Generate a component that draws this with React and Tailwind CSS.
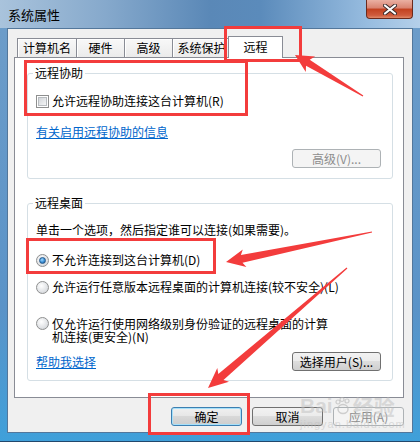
import React from 'react'

// 红色标注箭头：尾部细，头部三角
function arrowPoints(x1, y1, x2, y2, head = 18, hw = 9, sw = 3.5, tw = 0.6) {
    const dx = x2 - x1
    const dy = y2 - y1
    const len = Math.hypot(dx, dy)
    const ux = dx / len
    const uy = dy / len
    const px = -uy
    const py = ux
    const bx = x2 - ux * head
    const by = y2 - uy * head
    const jx = bx + ux * 3
    const jy = by + uy * 3
    const pts = [
        [x1 + px * tw, y1 + py * tw],
        [jx + px * sw, jy + py * sw],
        [bx + px * hw, by + py * hw],
        [x2, y2],
        [bx - px * hw, by - py * hw],
        [jx - px * sw, jy - py * sw],
        [x1 - px * tw, y1 - py * tw],
    ]
    return pts.map(p => p[0].toFixed(1) + ',' + p[1].toFixed(1)).join(' ')
}

function Btn({ children, kind, w = 'w-[71px]' }) {
    let cls = 'border-[#707070] bg-[linear-gradient(#f2f2f2_0%,#ebebeb_50%,#dddddd_50%,#cfcfcf_100%)] text-black'
    if (kind === 'default') {
        cls = 'border-[#3c7fb1] bg-[linear-gradient(#f0f0f0_0%,#e6e6e6_50%,#d8d8d8_50%,#cdcdcd_100%)] shadow-[inset_0_0_0_1px_#a6e0fa] text-black'
    }
    if (kind === 'disabled') {
        cls = 'border-[#adb2b5] bg-[#f4f4f4] text-[#8d8d8d]'
    }
    return (
        <div className={`${w} h-[19px] rounded-[3px] border flex items-center justify-center text-[12px] leading-[14px] ${cls}`}>
            {children}
        </div>
    )
}

function Checkbox() {
    return (
        <div className="w-[13px] h-[13px] border border-[#8e8f8f] bg-white p-[1px] shrink-0">
            <div className="w-full h-full border border-[#b8bcc0] bg-[linear-gradient(135deg,#d3d6da,#f4f5f6)]"></div>
        </div>
    )
}

function Radio({ checked }) {
    return (
        <div className="w-[13px] h-[13px] rounded-full border border-[#8e8f8f] bg-[radial-gradient(circle_at_40%_35%,#ffffff,#e0e2e5_60%,#c8cbcf)] flex items-center justify-center shrink-0">
            {checked && (
                <div className="w-[7px] h-[7px] rounded-full border border-[#25598b] bg-[radial-gradient(circle_at_40%_35%,#9fd8ff,#3a8fd6_55%,#1a4f86)]"></div>
            )}
        </div>
    )
}

function Group({ title, className = '', children }) {
    return (
        <div className={`relative rounded-[3px] border border-[#d5dfe5] pl-[8px] pr-[11px] ${className}`}>
            <span className="absolute left-[5px] top-[-8px] px-[2px] bg-white leading-[14px]">{title}</span>
            {children}
        </div>
    )
}

function App() {
    const tabs = [
        { label: '计算机名', w: 'w-[60px]' },
        { label: '硬件', w: 'w-[49px] -ml-px' },
        { label: '高级', w: 'w-[49px] -ml-px' },
        { label: '系统保护', w: 'w-[59px] -ml-px' },
    ]

    const red = '#f33c3c'

    return (
        <div className="relative w-[420px] h-[442px] overflow-hidden bg-[linear-gradient(180deg,#6e9dc9_0%,#5a93c8_70%,#3fa0da_100%)] font-['Noto_Sans_CJK_SC','Liberation_Sans',sans-serif] text-[12px] text-black">
            {/* 标题栏 */}
            <div className="h-[28px] flex items-start bg-[linear-gradient(90deg,#a9c3dc_0%,#86a9cc_25%,#5a88b7_50%,#5b8bbb_62%,#98bde0_88%,#b5d0ea_100%)]">
                <span className="pl-[8px] pt-[6px] text-[13px] leading-[18px] text-black">系统属性</span>
                <div className="ml-auto mr-[7px] w-[47px] h-[19px] rounded-b-[4px] border border-t-0 border-[#6b2a1c] bg-[linear-gradient(#eab0a2_0%,#d9826f_45%,#c2401f_50%,#cf5b3c_85%,#e08a6a_100%)] flex items-center justify-center">
                    <svg width="14" height="11" viewBox="0 0 14 11">
                        <path d="M2 1.5 L12 9.5 M12 1.5 L2 9.5" stroke="#3a2a2a" strokeWidth="4" strokeLinecap="round" />
                        <path d="M2 1.5 L12 9.5 M12 1.5 L2 9.5" stroke="#ffffff" strokeWidth="2.2" strokeLinecap="round" />
                    </svg>
                </div>
            </div>

            {/* 客户区 */}
            <div className="px-[7px]">
                <div className="h-[405px] border border-[#53779b] bg-[#f0f0f0] flex flex-col pt-[7px] pl-[6px] pr-[8px]">
                    {/* 选项卡 */}
                    <div className="flex items-end h-[21px] pl-[3px]">
                        {tabs.map(t => (
                            <div
                                key={t.label}
                                className={`${t.w} h-[19px] border border-b-0 border-[#898c95] bg-[linear-gradient(#f8f8f8,#ebebeb)] shadow-[inset_1px_1px_0_#ffffff] flex items-center justify-center leading-[14px]`}
                            >
                                {t.label}
                            </div>
                        ))}
                        <div className="relative z-10 -ml-[3px] w-[55px] h-[22px] -mb-px border border-b-0 border-[#898c95] bg-white flex items-start justify-center pt-[3px] leading-[14px]">
                            远程
                        </div>
                    </div>

                    {/* 面板 */}
                    <div className="h-[341px] border border-[#898c95] bg-white flex flex-col pt-[15px] pl-[12px] pr-[10px]">
                        <Group title="远程协助" className="pt-[20px] pb-[10px]">
                            <div className="flex items-center h-[14px] gap-[3px]">
                                <Checkbox />
                                <span className="leading-[14px]">允许远程协助连接这台计算机(R)</span>
                            </div>
                            <div className="mt-[17px] h-[14px] leading-[14px]">
                                <span className="text-[#0066cc] underline">有关启用远程协助的信息</span>
                            </div>
                            <div className="mt-[10px] flex justify-end">
                                <Btn kind="disabled" w="w-[89px]">高级(V)...</Btn>
                            </div>
                        </Group>

                        <Group title="远程桌面" className="mt-[24px] pt-[19px] pb-[9px]">
                            <div className="h-[14px] leading-[14px]">单击一个选项，然后指定谁可以连接(如果需要)。</div>
                            <div className="mt-[16px] flex items-center h-[14px] gap-[3px]">
                                <Radio checked />
                                <span className="leading-[14px]">不允许连接到这台计算机(D)</span>
                            </div>
                            <div className="mt-[13px] flex items-center h-[14px] gap-[3px]">
                                <Radio />
                                <span className="leading-[14px]">允许运行任意版本远程桌面的计算机连接(较不安全)(L)</span>
                            </div>
                            <div className="mt-[23px] flex items-start h-[26px] gap-[3px]">
                                <Radio />
                                <span className="leading-[13px]">
                                    仅允许运行使用网络级别身份验证的远程桌面的计算<br />机连接(更安全)(N)
                                </span>
                            </div>
                            <div className="mt-[9px] flex items-center justify-between h-[19px]">
                                <span className="text-[#0066cc] underline leading-[14px]">帮助我选择</span>
                                <Btn w="w-[89px]">选择用户(S)...</Btn>
                            </div>
                        </Group>
                    </div>

                    {/* 底部按钮 */}
                    <div className="mt-[9px] flex justify-end gap-[10px]">
                        <Btn kind="default">确定</Btn>
                        <Btn>取消</Btn>
                        <Btn kind="disabled">应用(A)</Btn>
                    </div>
                </div>
            </div>
            <div className="absolute left-0 right-0 bottom-0 h-px bg-[#22486c]"></div>

            {/* 水印 */}
            <div className="absolute left-[300px] top-[394px] flex flex-col items-start pointer-events-none text-[rgba(190,190,190,0.5)]">
                <div className="flex items-center gap-[2px] text-[21px] leading-[24px] font-bold font-['Liberation_Sans','Noto_Sans_CJK_SC',sans-serif]">
                    <span>Bai</span>
                    <svg width="16" height="18" viewBox="0 0 16 18">
                        <ellipse cx="8" cy="12" rx="5" ry="4.5" fill="none" stroke="rgba(180,180,180,0.6)" strokeWidth="1.5" />
                        <circle cx="3" cy="5" r="2" fill="none" stroke="rgba(180,180,180,0.6)" strokeWidth="1.2" />
                        <circle cx="7" cy="2.5" r="2" fill="none" stroke="rgba(180,180,180,0.6)" strokeWidth="1.2" />
                        <circle cx="12" cy="4" r="2" fill="none" stroke="rgba(180,180,180,0.6)" strokeWidth="1.2" />
                    </svg>
                    <span className="font-['Noto_Sans_CJK_SC',sans-serif]">经验</span>
                </div>
                <div className="text-[11px] leading-[12px] tracking-[1px] font-['Liberation_Sans',sans-serif]">jingyan.baidu.com</div>
            </div>

            {/* 红色标注框 */}
            <div className="absolute left-[224px] top-[26px] w-[78px] h-[36px] border-[3px] border-[#f33c3c]"></div>
            <div className="absolute left-[24px] top-[60px] w-[224px] h-[56px] border-[3px] border-[#f33c3c]"></div>
            <div className="absolute left-[26px] top-[238px] w-[190px] h-[36px] border-[3px] border-[#f33c3c]"></div>
            <div className="absolute left-[148px] top-[393px] w-[102px] h-[42px] border-[3px] border-[#f33c3c]"></div>

            {/* 红色箭头 */}
            <svg className="absolute left-0 top-0 pointer-events-none" width="420" height="442">
                <polygon points={arrowPoints(363, 96, 295, 55, 18, 9, 3.5, 0.6)} fill={red} />
                <polygon points={arrowPoints(372, 232, 226, 262, 19, 9, 4, 0.6)} fill={red} />
                <polygon points={arrowPoints(347, 268, 208, 388, 20, 9, 4, 0.6)} fill={red} />
            </svg>
        </div>
    )
}

export default App
